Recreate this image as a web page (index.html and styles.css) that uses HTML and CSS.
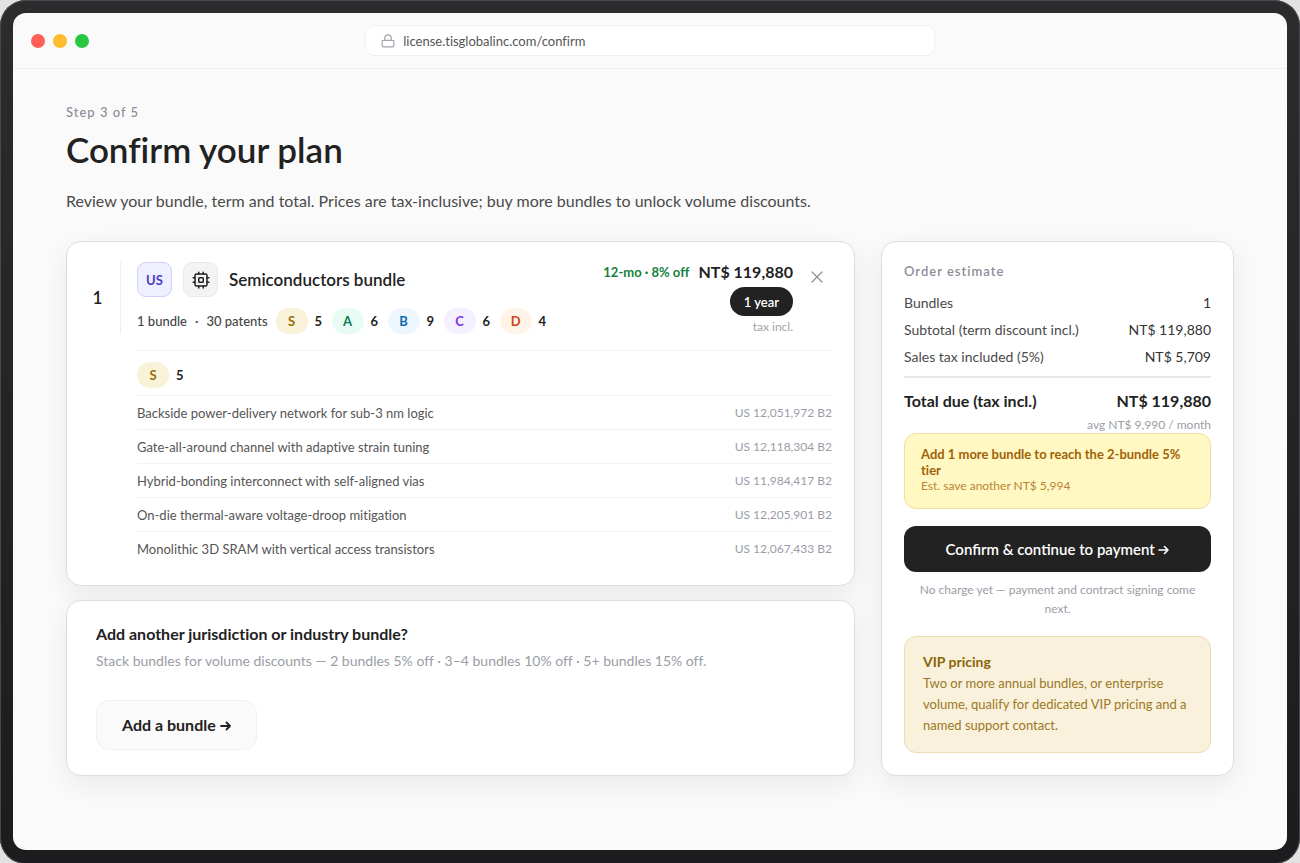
FILE: index.html
```html
<!DOCTYPE html>
<html lang="en">
<head>
    <meta charset="UTF-8">
    <meta name="viewport" content="width=device-width, initial-scale=1.0">
    <title>Confirm your plan</title>
    <link rel="stylesheet" href="styles.css">
</head>
<body>
    <div class="device">
        <div class="screen">
            <header class="bar">
                <div class="dots">
                    <span class="dot red"></span>
                    <span class="dot yellow"></span>
                    <span class="dot green"></span>
                </div>
                <div class="url">
                    <svg width="14" height="14" viewBox="0 0 24 24" fill="none" stroke="currentColor" stroke-width="2" stroke-linecap="round" stroke-linejoin="round"><rect x="2" y="11" width="20" height="11" rx="2"/><path d="M6.500 11V7a5.500 5.500 0 0 1 11 0v4"/></svg>
                    <span>license.tisglobalinc.com/confirm</span>
                </div>
            </header>

            <main>
                <p class="step">Step 3 of 5</p>
                <h1>Confirm your plan</h1>
                <p class="lead">Review your bundle, term and total. Prices are tax-inclusive; buy more bundles to unlock volume discounts.</p>

                <div class="columns">
                    <div class="left">
                        <!-- bundle -->
                        <section class="card bundle">
                            <div class="count">1</div>
                            <div class="detail">
                                <div class="top">
                                    <div class="info">
                                        <div class="name">
                                            <span class="tile us">US</span>
                                            <span class="tile chip">
                                                <svg width="18" height="18" viewBox="0 0 24 24" fill="none" stroke="currentColor" stroke-width="2" stroke-linecap="round" stroke-linejoin="round"><rect x="4" y="4" width="16" height="16" rx="2"/><rect x="9" y="9" width="6" height="6" rx="1"/><path d="M9 1.500V4M15 1.500V4M9 20v2.500M15 20v2.500M20 9h2.500M20 15h2.500M1.500 9H4M1.500 15H4"/></svg>
                                            </span>
                                            <h2>Semiconductors bundle</h2>
                                        </div>
                                        <div class="grades">
                                            <span class="meta">1 bundle<i>·</i>30 patents</span>
                                            <span class="pill s">S</span><b>5</b>
                                            <span class="pill a">A</span><b>6</b>
                                            <span class="pill b">B</span><b>9</b>
                                            <span class="pill c">C</span><b>6</b>
                                            <span class="pill d">D</span><b>4</b>
                                        </div>
                                    </div>
                                    <div class="price">
                                        <p><span class="off">12-mo · 8% off</span><strong>NT$ 119,880</strong></p>
                                        <button type="button" class="term">1 year</button>
                                        <small>tax incl.</small>
                                    </div>
                                    <button type="button" class="close" aria-label="Remove bundle">
                                        <svg width="12" height="12" viewBox="0 0 12 12" fill="none" stroke="currentColor" stroke-width="1.200" stroke-linecap="round"><path d="M1 1l10 10M11 1L1 11"/></svg>
                                    </button>
                                </div>

                                <div class="grades group">
                                    <span class="pill s">S</span><b>5</b>
                                </div>
                                <table class="patents">
                                    <tr><td>Backside power-delivery network for sub-3 nm logic</td><td>US 12,051,972 B2</td></tr>
                                    <tr><td>Gate-all-around channel with adaptive strain tuning</td><td>US 12,118,304 B2</td></tr>
                                    <tr><td>Hybrid-bonding interconnect with self-aligned vias</td><td>US 11,984,417 B2</td></tr>
                                    <tr><td>On-die thermal-aware voltage-droop mitigation</td><td>US 12,205,901 B2</td></tr>
                                    <tr><td>Monolithic 3D SRAM with vertical access transistors</td><td>US 12,067,433 B2</td></tr>
                                </table>
                            </div>
                        </section>

                        <!-- add more -->
                        <section class="card more">
                            <h3>Add another jurisdiction or industry bundle?</h3>
                            <p>Stack bundles for volume discounts — 2 bundles 5% off · 3–4 bundles 10% off · 5+ bundles 15% off.</p>
                            <button type="button" class="add">Add a bundle
                                <svg class="arrow" width="11" height="10" viewBox="0 0 11 10" fill="none" stroke="currentColor" stroke-width="1.800" stroke-linecap="round" stroke-linejoin="round"><path d="M1 5h9M6.500 1.500L10 5 6.500 8.500"/></svg>
                            </button>
                        </section>
                    </div>

                    <!-- order -->
                    <aside class="card order">
                        <h4>Order estimate</h4>
                        <dl>
                            <div><dt>Bundles</dt><dd>1</dd></div>
                            <div><dt>Subtotal (term discount incl.)</dt><dd>NT$ 119,880</dd></div>
                            <div><dt>Sales tax included (5%)</dt><dd>NT$ 5,709</dd></div>
                            <div class="total"><dt>Total due (tax incl.)</dt><dd>NT$ 119,880</dd></div>
                        </dl>
                        <p class="avg">avg NT$ 9,990 / month</p>
                        <div class="tip">
                            <strong>Add 1 more bundle to reach the 2-bundle 5% tier</strong>
                            <p>Est. save another NT$ 5,994</p>
                        </div>
                        <button type="button" class="confirm">Confirm &amp; continue to payment
                            <svg class="arrow" width="11" height="10" viewBox="0 0 11 10" fill="none" stroke="currentColor" stroke-width="1.600" stroke-linecap="round" stroke-linejoin="round"><path d="M1 5h9M6.500 1.500L10 5 6.500 8.500"/></svg>
                        </button>
                        <p class="note">No charge yet — payment and contract signing come next.</p>
                        <div class="vip">
                            <strong>VIP pricing</strong>
                            <p>Two or more annual bundles, or enterprise volume, qualify for dedicated VIP pricing and a named support contact.</p>
                        </div>
                    </aside>
                </div>
            </main>
        </div>
    </div>
</body>
</html>
```

FILE: styles.css
```css
* {margin:0; padding:0; box-sizing:border-box;}
body {
    background:#e2e2e3; color:#222;
    font-family:Lato, "Liberation Sans", sans-serif; font-size:14px; line-height:20px;
    font-variant-ligatures:none;
}
button {font-family:inherit; border:0; cursor:pointer;}

/* device frame */
.device {
    display:flex; min-height:100vh; padding:13px 13px 14px;
    background:linear-gradient(#2c2c2e, #1c1c1e);
    border-radius:26px;
    box-shadow:inset 0 0 0 1px #48484a;
}
.screen {flex:1; background:#fafafa; border-radius:13px; overflow:hidden;}

.bar {
    display:grid; grid-template-columns:1fr 46% 1fr; align-items:center;
    height:56px; padding:0 18px;
    border-bottom:1px solid #f0f0f0;
}
.dots {display:flex; gap:8px;}
.dot {width:14px; height:14px; border-radius:50%;}
.red {background:#ff5f57;}
.yellow {background:#febc2e;}
.green {background:#28c840;}
.url {
    display:flex; align-items:center; gap:8px;
    height:31px; padding:0 15px;
    background:#fff; border:1px solid #f0f0f0; border-radius:9px;
    color:#555; font-size:13px;
}
.url svg {color:#a0a3ad;}

main {padding:33px 53px 74px;}
.step {color:#8b8e99; font-size:13px; font-weight:500; letter-spacing:1px;}
h1 {margin-top:5px; font-size:35px; line-height:44px; font-weight:600;}
.lead {margin-top:18px; color:#4a4a4a; font-size:16px; line-height:24px;}

/* cards */
.columns {display:grid; grid-template-columns:1fr 353px; gap:26px; margin-top:28px;}
.left {display:flex; flex-direction:column; gap:14px;}
.card {
    background:#fff; border:1px solid #dededf; border-radius:15px;
    box-shadow:0 8px 28px rgba(0, 0, 0, 0.07);
}

.bundle {display:flex; padding:20px 22px 19px 8px;}
.count {
    display:flex; align-items:center; justify-content:center;
    width:46px; height:72px;
    border-right:1px solid #eee;
    font-size:17px; font-weight:600;
}
.detail {flex:1; padding-left:16px;}
.top {display:flex; height:89px; border-bottom:1px solid #f2f2f2;}
.info {flex:1;}
.name {display:flex; align-items:center; gap:11px;}
.tile {
    display:flex; align-items:center; justify-content:center;
    width:35px; height:35px; border:1px solid #e9e9e9; border-radius:9px;
    background:#f3f3f3;
}
.us {background:#eef0ff; border-color:#cfcffa; color:#4a3cc8; font-size:13px; font-weight:700;}
h2 {font-size:17px; font-weight:600;}
.grades {display:flex; align-items:center; margin-top:11px;}
.grades b {width:24px; padding-left:7px; font-size:13px;}
.meta {margin-right:8px; color:#444; font-size:13px; font-weight:500; white-space:nowrap;}
.meta i {margin:0 8px; font-style:normal;}
.pill {width:32px; border-radius:13px; font-size:13px; line-height:26px; font-weight:700; text-align:center;}
.s {background:#f9f1d8; color:#96700f;}
.a {background:#e9fcf3; color:#0b7a56;}
.b {background:#eef7ff; color:#0b6cae;}
.c {background:#f4f0ff; color:#7a35e0;}
.d {background:#fff4ea; color:#cc4414;}

.price {display:flex; flex-direction:column; align-items:flex-end; white-space:nowrap;}
.price p {display:flex; align-items:center; gap:9px;}
.off {color:#15803d; font-size:13px; font-weight:700;}
.price strong {font-size:16px;}
.term {
    height:29px; margin-top:5px; padding:0 14px;
    background:#222; color:#fff; border-radius:15px;
    font-size:13px; font-weight:600;
}
.price small {margin-top:1px; color:#a0a3ad; font-size:12px;}
.close {
    display:flex; align-items:center; justify-content:center;
    width:30px; height:30px; margin-left:9px;
    background:none; color:#8b8e99;
}

.group {height:26px; margin:11px 0 7px;}
.patents {width:100%; border-collapse:collapse;}
.patents td {height:34px; border-top:1px solid #f2f2f2; color:#555; font-size:13px;}
.patents td:last-child {color:#9a9da6; font-size:12px; text-align:right;}

.more {flex:1; padding:23px 29px 24px;}
.more h3 {font-size:16px; font-weight:700;}
.more p {margin-top:7px; color:#9a9da6; font-size:14px;}
.add {
    height:50px; margin-top:29px; padding:0 25px;
    background:#fafafa; border:1px solid #f0f0f0; border-radius:13px;
    color:#222; font-size:16px; font-weight:700;
}

/* order estimate */
.order {padding:20px 22px 22px;}
h4 {color:#8b8e99; font-size:13px; line-height:19px; font-weight:600; letter-spacing:1px;}
dl {margin-top:8px;}
dl div {display:flex; justify-content:space-between; padding:4px 0; color:#4a4a4a;}
dl div:not(.total) {line-height:19px;}
dd {color:#333;}
dl .total {
    margin-top:6px; padding-top:13px; border-top:2px solid #e8e8e8;
    color:#222; font-size:16px; font-weight:700;
}
dl .total dd {color:#222;}
.avg {margin-top:2px; color:#9a9da6; font-size:12px; line-height:16px; text-align:right;}
.tip {
    padding:12px 16px 14px; background:#fff8c2; border:1px solid #eee0a0; border-radius:12px;
    color:#a16207; font-size:13px; line-height:16px;
}
.tip strong {display:block;}
.tip p {color:#b98435; font-size:12px;}
.confirm {
    width:100%; height:46px; margin-top:17px;
    background:#222; color:#fff; border-radius:12px;
    font-size:15px; font-weight:600;
}
.note {margin-top:8px; padding:0 8px; color:#9a9da6; font-size:12px; line-height:19px; text-align:center;}
.vip {
    margin-top:18px; padding:14px 18px 16px;
    background:#f9f1dc; border:1px solid #ebdcb4; border-radius:12px;
    color:#8a6508; font-size:13px; line-height:21px;
}
.vip strong {font-size:14px;}
.vip p {color:#9c7824;}
```
